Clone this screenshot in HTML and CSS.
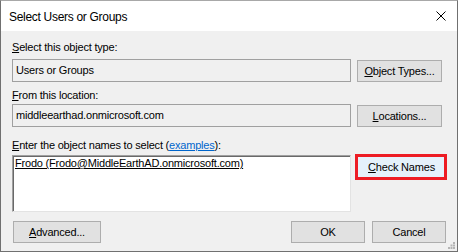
FILE: index.html
```html
<!DOCTYPE html>
<html lang="en">
<head>
  <meta charset="UTF-8">
  <meta name="viewport" content="width=device-width, initial-scale=1.0">
  <title>Select Users or Groups</title>
  <link rel="stylesheet" href="styles.css">
</head>
<body>

  <div class="dialog">
    <!-- Title bar -->
    <div class="titlebar">
      <span class="title">Select Users or Groups</span>
      <svg class="close" width="10" height="10" viewBox="0 0 10 10">
        <path d="M0.5 0.5 L9.5 9.5 M9.5 0.5 L0.5 9.5" stroke="#000" stroke-width="1" fill="none"/>
      </svg>
    </div>

    <div class="content">
      <div class="label label-type"><u>S</u>elect this object type:</div>
      <div class="row">
        <div class="field">Users or Groups</div>
        <div class="btn btn-side"><u>O</u>bject Types...</div>
      </div>

      <div class="label label-loc"><u>F</u>rom this location:</div>
      <div class="row">
        <div class="field">middleearthad.onmicrosoft.com</div>
        <div class="btn btn-side"><u>L</u>ocations...</div>
      </div>

      <div class="label label-names"><u>E</u>nter the object names to select (<a href="#" class="link">examples</a>):</div>
      <div class="row row-names">
        <div class="names"><u>Frodo (Frodo@MiddleEarthAD.onmicrosoft.com)</u></div>
        <div class="highlight">
          <div class="btn-check"><u>C</u>heck Names</div>
        </div>
      </div>

      <div class="footer">
        <div class="btn btn-adv"><u>A</u>dvanced...</div>
        <div class="spacer"></div>
        <div class="btn btn-ok">OK</div>
        <div class="btn btn-ok">Cancel</div>
      </div>
    </div>

    <!-- Resize grip -->
    <svg class="grip" width="7" height="7" viewBox="0 0 7 7">
      <rect x="5" y="0" width="2" height="2" fill="#b4b4b4"/>
      <rect x="2.5" y="2.5" width="2" height="2" fill="#b4b4b4"/>
      <rect x="5" y="2.5" width="2" height="2" fill="#b4b4b4"/>
      <rect x="0" y="5" width="2" height="2" fill="#b4b4b4"/>
      <rect x="2.5" y="5" width="2" height="2" fill="#b4b4b4"/>
      <rect x="5" y="5" width="2" height="2" fill="#b4b4b4"/>
    </svg>
  </div>

</body>
</html>
```

FILE: styles.css
```css
body {
  margin: 0;
  font-family: 'Liberation Sans', Arial, sans-serif;
  font-size: 11px;
  color: #000;
  background: #f0f0f0;
}

.dialog {
  position: relative;
  box-sizing: border-box;
  width: 458px;
  height: 252px;
  border: 1px solid #707070;
  border-top-color: #a8a8a8;
  background: #f0f0f0;
}

/* Title bar */
.titlebar {
  display: flex;
  align-items: center;
  height: 30px;
  padding-left: 8px;
  background: #fff;
}

.title {
  font-size: 12px;
  letter-spacing: -0.3px;
  padding-top: 1px;
}

.close {
  margin-left: auto;
  margin-right: 11px;
}

.content {
  padding: 0 11px;
  letter-spacing: -0.2px;
}

.label {
  line-height: 14px;
  white-space: nowrap;
}

.label-type {
  padding-top: 9px;
  margin-bottom: 5px;
}

.label-loc {
  margin-top: 6px;
  margin-bottom: 2px;
}

.label-names {
  margin-top: 11px;
  margin-bottom: 3px;
}

.link {
  color: #0066cc;
  text-decoration: underline;
}

.row {
  display: grid;
  grid-template-columns: 339px 85px;
  column-gap: 6px;
  align-items: start;
}

.field {
  box-sizing: border-box;
  height: 23px;
  line-height: 21px;
  padding-left: 3px;
  border: 1px solid #a0a0a0;
  background: #f0f0f0;
}

.btn {
  box-sizing: border-box;
  height: 22px;
  line-height: 20px;
  text-align: center;
  border: 1px solid #adadad;
  background: #e1e1e1;
}

.btn-side {
  margin-top: 1px;
}

.names {
  box-sizing: border-box;
  height: 57px;
  padding: 1px 0 0 2px;
  line-height: 13px;
  background: #fff;
  border-top: 1px solid #a0a0a0;
  border-left: 1px solid #a0a0a0;
  border-right: 1px solid #e3e3e3;
  border-bottom: 1px solid #e3e3e3;
  box-shadow: inset 1px 1px 0 #696969;
}

.highlight {
  box-sizing: border-box;
  width: 92px;
  height: 26px;
  margin-top: -1px;
  margin-left: -2px;
  border: 3px solid #ed1c24;
  background: #e5f1fb;
}

.btn-check {
  line-height: 20px;
  text-align: center;
  padding-left: 1px;
}

.footer {
  display: flex;
  gap: 7px;
  margin-top: 9px;
}

.spacer {
  flex: 1;
}

.btn-adv {
  width: 88px;
  margin-left: 1px;
}

.btn-ok {
  width: 74px;
}

.grip {
  position: absolute;
  right: 2px;
  bottom: 2px;
}
```
